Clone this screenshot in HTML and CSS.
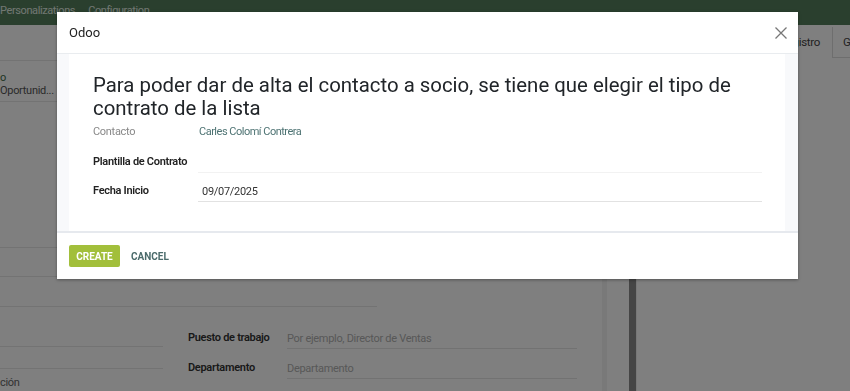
FILE: index.html
```html
<!DOCTYPE html>
<html lang="es">
<head>
    <meta charset="UTF-8">
    <meta name="viewport" content="width=device-width, initial-scale=1.0">
    <title>Odoo</title>
    <link rel="stylesheet" href="styles.css">
</head>
<body>
    <!-- Page behind the dialog -->
    <header class="navbar">
        <span class="nav-item">Personalizations</span>
        <span class="nav-item">Configuration</span>
    </header>

    <main class="page">
        <section class="form-area">
            <div class="control-row"></div>
            <div class="record-row">
                <span class="record-stage">o</span>
                <span class="record-name">Oportunid...</span>
            </div>
            <div class="blank-row tall"></div>
            <div class="blank-row"></div>
            <div class="blank-row short"></div>

            <div class="detail-grid">
                <div class="detail-left">
                    <div class="left-line first"></div>
                    <div class="left-line"></div>
                    <span class="left-text">ción</span>
                </div>
                <div class="detail-right">
                    <div class="detail-field">
                        <span class="detail-label">Puesto de trabajo</span>
                        <span class="detail-input">Por ejemplo, Director de Ventas</span>
                    </div>
                    <div class="detail-field">
                        <span class="detail-label">Departamento</span>
                        <span class="detail-input">Departamento</span>
                    </div>
                </div>
            </div>
        </section>
        <div class="gutter"></div>
        <div class="scrollbar"></div>
        <aside class="side">
            <div class="side-tabs">
                <span class="side-tab">Registro</span>
                <span class="side-tab active">G</span>
            </div>
        </aside>
    </main>

    <div class="backdrop"></div>

    <!-- Dialog -->
    <div class="modal">
        <div class="modal-header">
            <span class="modal-title">Odoo</span>
            <button class="modal-close" aria-label="Close">
                <svg width="12" height="12" viewBox="0 0 12 12">
                    <path d="M0.5 0.5 L11.5 11.5 M11.5 0.5 L0.5 11.5" stroke="#777" stroke-width="1.3" fill="none"/>
                </svg>
            </button>
        </div>

        <div class="modal-body">
            <div class="sheet">
                <h1 class="sheet-title">Para poder dar de alta el contacto a socio, se tiene que elegir el tipo de contrato de la lista</h1>
                <div class="field-grid">
                    <span class="field-label muted">Contacto</span>
                    <span class="field-value">Carles Colomí Contrera</span>

                    <span class="field-label">Plantilla de Contrato</span>
                    <span class="field-input light"></span>

                    <span class="field-label">Fecha Inicio</span>
                    <span class="field-input">09/07/2025</span>
                </div>
            </div>
        </div>

        <div class="modal-footer">
            <button class="btn-primary">CREATE</button>
            <button class="btn-link">CANCEL</button>
        </div>
    </div>
</body>
</html>
```

FILE: styles.css
```css
/* General Page Styling */
body {
    margin: 0;
    font-family: Roboto, "Noto Sans", Arial, sans-serif;
    font-size: 11px;
    letter-spacing: -0.3px;
    color: #444;
    background-color: #fff;
    overflow: hidden;
    height: 391px;
}

/* Top Navigation */
.navbar {
    height: 25px;
    background-color: #547e5c;
    display: flex;
    align-items: flex-start;
    gap: 13px;
}

.nav-item {
    color: #e3eee5;
    font-size: 11px;
    letter-spacing: -0.4px;
    line-height: 21px;
}

/* Background Form */
.page {
    display: flex;
    height: 366px;
}

.form-area {
    width: 602px;
}

.control-row {
    height: 35px;
    border-bottom: 1px solid #e6e6e6;
}

.record-row {
    height: 41px;
    box-sizing: border-box;
    padding-top: 10px;
    border-bottom: 1px solid #e6e6e6;
    display: flex;
    flex-direction: column;
    line-height: 13px;
}

.record-stage {
    color: #3d6b47;
}

.record-name {
    color: #555;
}

.blank-row {
    height: 28px;
    border-bottom: 1px solid #e6e6e6;
}

.blank-row.tall {
    height: 145px;
}

.blank-row.short {
    height: 29px;
    width: 377px;
}

.detail-grid {
    display: flex;
}

.detail-left {
    width: 163px;
    display: flex;
    flex-direction: column;
}

.left-line {
    height: 21px;
    border-bottom: 1px solid #e6e6e6;
}

.left-line.first {
    height: 39px;
}

.left-text {
    margin-top: 7px;
    color: #666;
}

.detail-right {
    margin-left: 25px;
    padding-top: 20px;
    display: flex;
    flex-direction: column;
    gap: 8px;
}

.detail-field {
    display: flex;
    height: 22px;
}

.detail-label {
    width: 99px;
    font-weight: 600;
    color: #333;
    line-height: 22px;
}

.detail-input {
    width: 290px;
    border-bottom: 1px solid #e4e4e4;
    color: #b0b0b0;
    line-height: 24px;
}

.gutter {
    width: 27px;
    border-left: 5px solid #f2f2f2;
    box-sizing: border-box;
}

.scrollbar {
    width: 7px;
    background-color: #8a8a8a;
}

.side {
    flex: 1;
    border-left: 1px solid #eee;
}

.side-tabs {
    margin-top: 2px;
    display: flex;
    justify-content: flex-end;
    height: 31px;
}

.side-tab {
    padding: 0 12px;
    line-height: 31px;
    font-size: 11.5px;
    color: #444;
}

.side-tab.active {
    width: 7px;
    padding: 0 0 0 10px;
    border-left: 1px solid #ddd;
    border-bottom: 1px solid #ddd;
    white-space: nowrap;
}

/* Dialog Overlay */
.backdrop {
    position: fixed;
    inset: 0;
    background: rgba(0, 0, 0, 0.5);
}

.modal {
    position: absolute;
    left: 57px;
    top: 12px;
    width: 741px;
    background-color: #fff;
    box-shadow: 0 1px 3px rgba(0, 0, 0, 0.35);
}

.modal-header {
    height: 41px;
    border-bottom: 1px solid #e9ecef;
    display: flex;
    align-items: center;
    justify-content: space-between;
    padding: 0 11px 0 12px;
}

.modal-title {
    font-size: 13px;
    letter-spacing: 0;
    color: #222;
}

.modal-close {
    border: none;
    background: none;
    padding: 0;
    width: 12px;
    height: 12px;
    display: flex;
}

.modal-body {
    background-color: #f8f9fb;
    padding: 0 13px 0 12px;
}

.sheet {
    height: 177px;
    box-sizing: border-box;
    background-color: #fff;
    padding: 20px 23px 0 24px;
}

.sheet-title {
    margin: 0;
    font-size: 20.4px;
    line-height: 23px;
    font-weight: 400;
    letter-spacing: 0;
    color: #212529;
}

.field-grid {
    margin-top: 1px;
    display: grid;
    grid-template-columns: 105px 1fr;
    grid-auto-rows: 22px;
    row-gap: 7.5px;
}

.field-label {
    font-weight: 600;
    color: #222;
    line-height: 22px;
}

.field-label.muted {
    font-weight: 400;
    color: #888;
}

.field-value {
    padding-left: 1px;
    color: #4e7373;
    letter-spacing: -0.5px;
    line-height: 22px;
}

.field-input {
    padding-left: 4px;
    border-bottom: 1px solid #e2e2e2;
    color: #333;
    line-height: 24px;
}

.field-input.light {
    border-bottom-color: #f2f2f2;
}

/* Footer Buttons */
.modal-footer {
    height: 46px;
    border-top: 2px solid #e6e9ee;
    display: flex;
    align-items: center;
    gap: 11px;
    padding: 0 12px;
}

.btn-primary {
    width: 51px;
    height: 22px;
    padding: 0;
    border: none;
    border-radius: 2px;
    background-color: #a2bf3b;
    color: #fff;
    font-family: inherit;
    font-size: 10px;
    font-weight: 700;
    letter-spacing: 0;
}

.btn-link {
    padding: 0;
    border: none;
    background: none;
    color: #4b6b6b;
    font-family: inherit;
    font-size: 10px;
    font-weight: 700;
    letter-spacing: 0;
}
```
